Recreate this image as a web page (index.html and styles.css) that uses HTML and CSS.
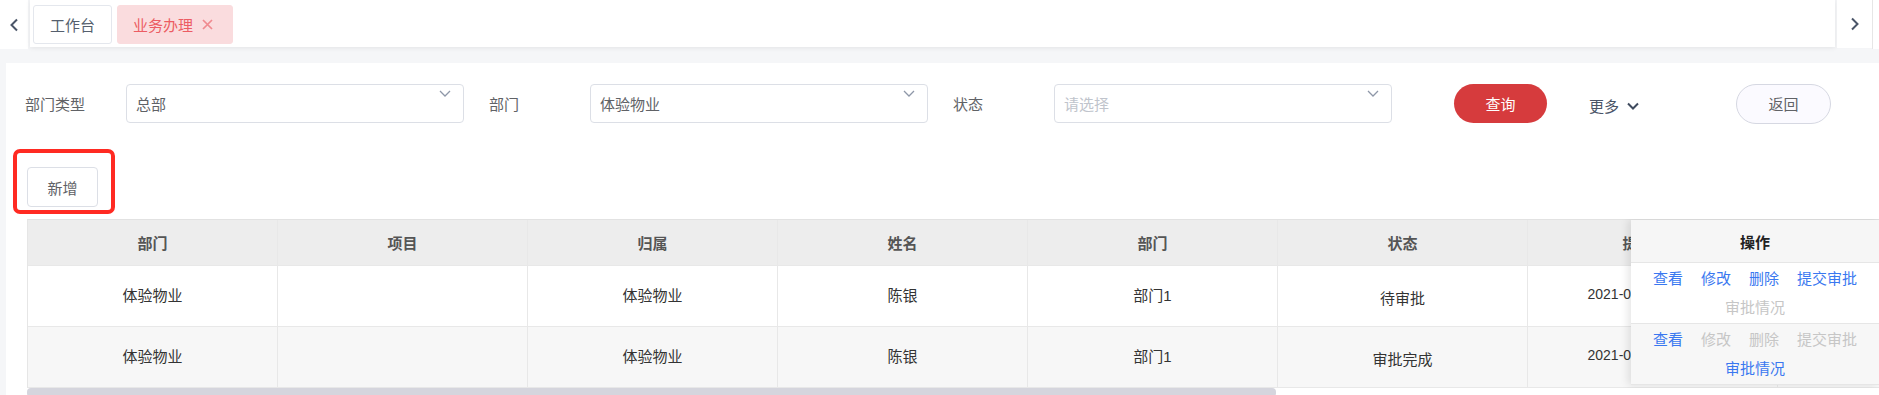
FILE: index.html
```html
<!DOCTYPE html>
<html lang="zh-CN">
<head>
<meta charset="utf-8">
<title>业务办理</title>
<link rel="stylesheet" href="styles.css">
</head>
<body>
<div class="tabbar">
  <div class="tab-arrow arrow-left">
    <svg width="10" height="14" viewBox="0 0 10 14"><path d="M8 1.5 L2.5 7 L8 12.5" fill="none" stroke="#4a5568" stroke-width="2"/></svg>
  </div>
  <div class="tab-scroll">
    <div class="tab">工作台</div>
    <div class="tab tab-active">业务办理
      <svg class="tab-close" width="11" height="11" viewBox="0 0 11 11"><path d="M1 1 L10 10 M10 1 L1 10" stroke="#f08a8f" stroke-width="1.7"/></svg>
    </div>
  </div>
  <div class="tab-arrow arrow-right">
    <svg width="10" height="14" viewBox="0 0 10 14"><path d="M2 1.5 L7.5 7 L2 12.5" fill="none" stroke="#4a5568" stroke-width="2"/></svg>
  </div>
  <div class="tab-end"></div>
</div>

<div class="panel">
  <div class="filters">
    <div class="field">
      <span class="field-label">部门类型</span>
      <div class="select">总部<svg class="caret" width="12" height="7" viewBox="0 0 12 7"><path d="M1 1 L6 6 L11 1" fill="none" stroke="#8e97a8" stroke-width="1.3"/></svg></div>
    </div>
    <div class="field">
      <span class="field-label">部门</span>
      <div class="select">体验物业<svg class="caret" width="12" height="7" viewBox="0 0 12 7"><path d="M1 1 L6 6 L11 1" fill="none" stroke="#8e97a8" stroke-width="1.3"/></svg></div>
    </div>
    <div class="field">
      <span class="field-label">状态</span>
      <div class="select placeholder">请选择<svg class="caret" width="12" height="7" viewBox="0 0 12 7"><path d="M1 1 L6 6 L11 1" fill="none" stroke="#8e97a8" stroke-width="1.3"/></svg></div>
    </div>
    <button class="btn-query">查询</button>
    <div class="more">更多<svg width="12" height="8" viewBox="0 0 12 8"><path d="M1 1.5 L6 6.5 L11 1.5" fill="none" stroke="#3f4b5e" stroke-width="2"/></svg></div>
    <button class="btn-back">返回</button>
  </div>

  <div class="toolbar">
    <button class="btn-add">新增</button>
    <div class="highlight"></div>
  </div>

  <div class="table-wrap">
    <table class="grid">
      <colgroup>
        <col class="c"><col class="c"><col class="c"><col class="c"><col class="c"><col class="c"><col class="c"><col class="c"><col class="c"><col class="c"><col class="c">
      </colgroup>
      <thead>
        <tr><th>部门</th><th>项目</th><th>归属</th><th>姓名</th><th>部门</th><th>状态</th><th>提交时间</th><th></th><th></th><th></th><th></th></tr>
      </thead>
      <tbody>
        <tr><td>体验物业</td><td></td><td>体验物业</td><td>陈银</td><td>部门1</td><td><span class="status">待审批</span></td><td class="num">2021-06-18 14:32:08</td><td></td><td></td><td></td><td></td></tr>
        <tr class="alt"><td>体验物业</td><td></td><td>体验物业</td><td>陈银</td><td>部门1</td><td><span class="status">审批完成</span></td><td class="num">2021-06-18 14:32:08</td><td></td><td></td><td></td><td></td></tr>
      </tbody>
    </table>
    <div class="fixed-col">
      <div class="fixed-head">操作</div>
      <div class="fixed-cell">
        <span class="link">查看</span><span class="link">修改</span><span class="link">删除</span><span class="link">提交审批</span><span class="link off">审批情况</span>
      </div>
      <div class="fixed-cell alt">
        <span class="link">查看</span><span class="link off">修改</span><span class="link off">删除</span><span class="link off">提交审批</span><span class="link">审批情况</span>
      </div>
    </div>
  </div>
  <div class="hscroll"><div class="thumb"></div></div>
</div>
</body>
</html>
```

FILE: styles.css
```css
* { box-sizing: border-box; margin: 0; padding: 0; }
html, body { width: 1879px; height: 395px; overflow: hidden; }
body {
  background: #f5f6f8;
  font-family: "Liberation Sans", "Noto Sans CJK SC", sans-serif;
  font-size: 15px;
  color: #606266;
}

/* ---------- tab bar ---------- */
.tabbar {
  display: flex;
  height: 49px;
  background: #f4f5f7;
}
.tab-arrow {
  display: flex;
  align-items: center;
  justify-content: center;
  background: #fff;
  height: 49px;
}
.arrow-left { width: 28px; }
.arrow-right { width: 35px; height: 48px; margin-left: 2px; }
.tab-end {
  width: 7px;
  background: #fff;
  border-left: 1px solid #e6e6e6;
}
.tab-scroll {
  flex: 1;
  margin-left: 2px;
  height: 47px;
  background: #fff;
  box-shadow: 0 1px 5px rgba(0, 0, 0, 0.07);
  display: flex;
  align-items: flex-start;
  gap: 5px;
  padding: 5px 0 0 3px;
}
.tab {
  height: 39px;
  display: flex;
  align-items: center;
  padding: 0 16px;
  border: 1px solid #e4e7ed;
  border-radius: 3px;
  color: #555f6e;
  font-size: 15px;
}
.tab-active {
  background: #fadcde;
  border-color: #fadcde;
  color: #ec5c63;
  padding: 0 19px 0 15px;
  gap: 9px;
}

/* ---------- panel ---------- */
.panel {
  margin: 14px 0 0 6px;
  width: 1873px;
  height: 400px;
  background: #fff;
  padding: 21px 0 0 21px;
  overflow: hidden;
}
.filters {
  display: flex;
  align-items: center;
  height: 39px;
  margin-left: -2px;
}
.field {
  display: flex;
  align-items: center;
  width: 439px;
  margin-right: 25px;
}
.field:nth-child(3) { margin-right: 0; }
.field-label {
  width: 101px;
  color: #606266;
}
.select {
  position: relative;
  width: 338px;
  height: 39px;
  border: 1px solid #dcdfe6;
  border-radius: 4px;
  padding: 0 9px;
  display: flex;
  align-items: center;
  color: #606266;
}
.select.placeholder { color: #c0c4cc; }
.caret {
  position: absolute;
  top: 5px;
  right: 12px;
}
.btn-query {
  margin-left: 62px;
  width: 93px;
  height: 39px;
  border: none;
  border-radius: 20px;
  background: #d63b3d;
  color: #fff;
  font: inherit;
}
.more {
  margin-left: 42px;
  display: flex;
  align-items: center;
  gap: 8px;
  color: #4a5568;
  padding-top: 4px;
}
.btn-back {
  margin-left: 97px;
  width: 95px;
  height: 40px;
  border: 1px solid #d6d8e2;
  border-radius: 20px;
  background: #fbfaff;
  color: #606266;
  font: inherit;
}

/* ---------- toolbar ---------- */
.toolbar {
  position: relative;
  margin-top: 44px;
  height: 40px;
}
.btn-add {
  width: 71px;
  height: 40px;
  border: 1px solid #dcdfe6;
  border-radius: 4px;
  background: #fff;
  color: #606266;
  font: inherit;
}
.highlight {
  position: absolute;
  left: -14px;
  top: -18px;
  width: 102px;
  height: 65px;
  border: 4px solid #ff2a22;
  border-radius: 7px;
}

/* ---------- table ---------- */
.table-wrap {
  position: relative;
  margin-top: 12px;
  width: 1852px;
  overflow: hidden;
}
.grid {
  width: 2750px;
  table-layout: fixed;
  border-collapse: separate;
  border-spacing: 0;
  border-top: 1px solid #e2e2e2;
  border-left: 1px solid #e6e6e6;
}
.grid col.c { width: 250px; }
.grid th, .grid td {
  border-right: 1px solid #e8e8e8;
  border-bottom: 1px solid #e8e8e8;
  text-align: center;
  vertical-align: middle;
}
.grid th {
  height: 46px;
  background: #ededed;
  color: #555;
  font-weight: 700;
}
.grid td {
  height: 61px;
  color: #333;
  background: #fff;
  padding-bottom: 4px;
}
.grid tr.alt td { background: #f7f7f7; }
.grid td.num { font-size: 14px; }
.status { display: inline-block; padding-top: 7px; }

.fixed-col {
  position: absolute;
  top: 1px;
  right: 0;
  width: 248px;
  background: #fff;
  box-shadow: -3px 0 8px rgba(0, 0, 0, 0.1);
}
.fixed-head {
  height: 43px;
  background: #f6f6f6;
  border-bottom: 1px solid #e6e6e6;
  display: flex;
  align-items: center;
  justify-content: center;
  color: #222;
  font-weight: 700;
}
.fixed-cell {
  height: 61px;
  border-bottom: 1px solid #e6e6e6;
  display: flex;
  flex-wrap: wrap;
  justify-content: center;
  align-content: center;
  column-gap: 18px;
  row-gap: 9px;
  padding: 0 6px;
  background: #fff;
}
.fixed-cell.alt { background: #f7f7f7; }
.link {
  color: #3a78f0;
  line-height: 20px;
}
.link.off { color: #c6c6c6; }

.hscroll {
  width: 1852px;
  height: 9px;
}
.thumb {
  width: 1249px;
  height: 9px;
  border-radius: 4px;
  background: #d5d5dd;
}
```
